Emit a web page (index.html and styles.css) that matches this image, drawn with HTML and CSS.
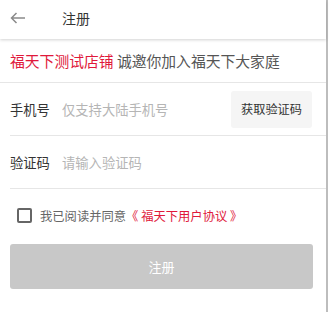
FILE: index.html
```html
<!DOCTYPE html>
<html lang="zh-CN">
<head>
    <meta charset="UTF-8">
    <meta name="viewport" content="width=device-width, initial-scale=1.0">
    <title>注册</title>
    <link rel="stylesheet" href="styles.css">
</head>
<body>
<div class="page">
    <div class="header">
        <svg class="back" width="16" height="12" viewBox="0 0 16 12">
            <path d="M15 6H1.5M6.5 1L1.5 6l5 5" fill="none" stroke="#8a8a8a" stroke-width="1.5"/>
        </svg>
        <span class="title">注册</span>
    </div>

    <div class="invite"><span class="shop">福天下测试店铺</span> 诚邀你加入福天下大家庭</div>

    <div class="form">
        <div class="row">
            <span class="label">手机号</span>
            <input class="field" type="tel" placeholder="仅支持大陆手机号">
            <button class="code-btn">获取验证码</button>
        </div>
        <div class="row">
            <span class="label">验证码</span>
            <input class="field" type="text" placeholder="请输入验证码">
        </div>
    </div>

    <label class="agree">
        <span class="check"></span>
        <span>我已阅读并同意</span><span class="link">《 福天下用户协议 》</span>
    </label>

    <button class="submit" disabled>注册</button>
</div>
</body>
</html>
```

FILE: styles.css
```css
body {
    margin: 0;
    background: #fff;
    font-family: "Noto Sans CJK SC", "Noto Sans", sans-serif;
    color: #333;
}
.page {
    width: 328px;
    height: 312px;
    border-right: 2px solid #bdbdbd;
    box-sizing: border-box;
}
.header {
    height: 39px;
    display: flex;
    align-items: center;
    padding-left: 10px;
    box-shadow: 0 1px 3px rgba(0, 0, 0, 0.18);
    position: relative;
}
.back {
    display: block;
    margin-top: -4px;
}
.title {
    margin-left: 36px;
    font-size: 14px;
    line-height: 14px;
    margin-top: -4px;
    color: #333;
}
.invite {
    height: 43px;
    line-height: 44px;
    padding-left: 10px;
    font-size: 14.8px;
    color: #555;
    border-bottom: 1px solid #e6e6e6;
    white-space: nowrap;
}
.shop {
    color: #e0193b;
}
.form {
    padding-left: 10px;
}
.row {
    height: 52px;
    display: flex;
    align-items: center;
    border-bottom: 1px solid #e6e6e6;
}
.label {
    width: 52px;
    font-size: 13.3px;
    color: #333;
}
.field {
    flex: 1;
    min-width: 0;
    border: none;
    outline: none;
    padding: 0;
    font-family: inherit;
    font-size: 13.3px;
    color: #333;
}
.field::placeholder {
    color: #b5b5b5;
}
.code-btn {
    width: 81px;
    height: 37px;
    margin-right: 14px;
    border: none;
    border-radius: 3px;
    background: #f5f5f5;
    font-family: inherit;
    font-size: 12.2px;
    color: #333;
    padding: 0;
}
.agree {
    display: flex;
    align-items: center;
    padding: 19px 0 0 17px;
    height: 15px;
    font-size: 12.3px;
    color: #666;
}
.check {
    width: 15px;
    height: 15px;
    box-sizing: border-box;
    border: 2px solid #666;
    border-radius: 2px;
    margin-right: 8px;
}
.link {
    color: #e0193b;
}
.submit {
    display: block;
    margin: 21px 0 0 10px;
    width: 303px;
    height: 45px;
    border: none;
    border-radius: 3px;
    background: #c8c8c8;
    color: #fff;
    font-family: inherit;
    font-size: 13px;
}
```
